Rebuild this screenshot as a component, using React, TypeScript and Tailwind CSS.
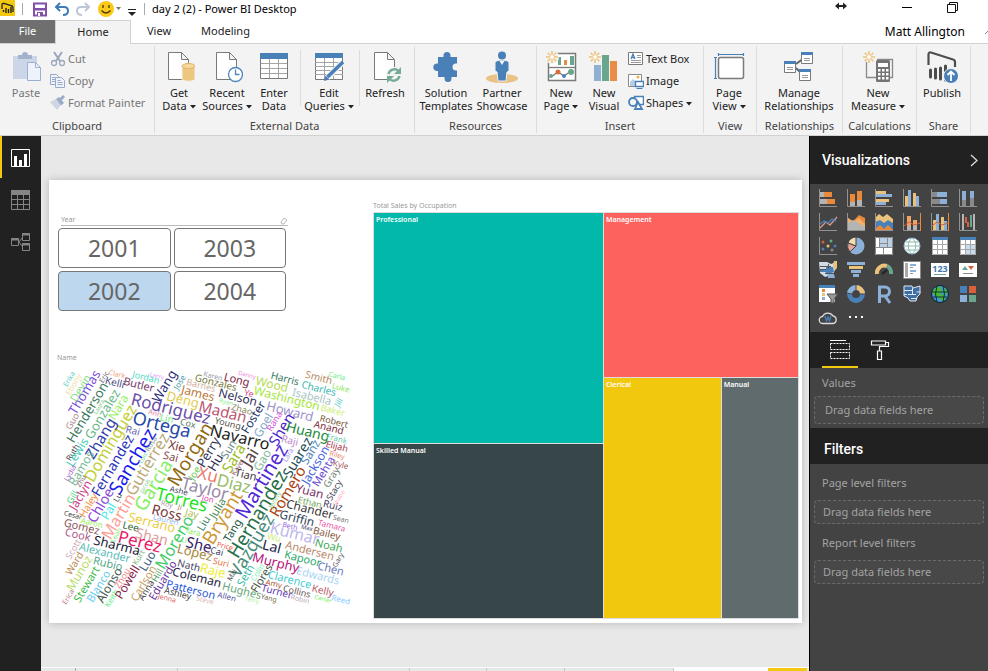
import React from "react";

type Kids = { children?: React.ReactNode };

/* ---------- Ribbon ---------- */

const Caret = () => (
  <svg className="ml-[3px] inline-block align-middle" width="6" height="4" viewBox="0 0 6 4">
    <path d="M0 0h6L3 3.6z" fill="#222" />
  </svg>
);

function Group({ label, className, children }: Kids & { label: string; className: string }) {
  return (
    <section aria-label={label} className={`flex shrink-0 flex-col py-[2px] ${className}`}>
      <div className="flex h-full flex-col border-r border-[#dcdcdc]">
        <div className="flex flex-1">{children}</div>
        <div className="h-[15px] text-center leading-[15px] text-[#444]">{label}</div>
      </div>
    </section>
  );
}

function BigButton({
  icon, lines, caret, className, muted,
}: { icon: React.ReactNode; lines: string[]; caret?: boolean; className: string; muted?: boolean }) {
  return (
    <button className={`flex flex-col items-center whitespace-nowrap pt-[5px] leading-[13px] ${muted ? "text-[#777]" : "text-[#222]"} ${className}`}>
      <span className="mb-[3px] block h-8">{icon}</span>
      {lines.map((l, i) => (
        <span key={l} className="block">
          {l}
          {caret && i === lines.length - 1 && <Caret />}
        </span>
      ))}
    </button>
  );
}

function SmallButton({ icon, label, caret, muted }: { icon: React.ReactNode; label: string; caret?: boolean; muted?: boolean }) {
  return (
    <button className={`flex h-[22px] items-center gap-[2px] whitespace-nowrap ${muted ? "text-[#777]" : "text-[#222]"}`}>
      <span className="block w-4">{icon}</span>
      <span>
        {label}
        {caret && <Caret />}
      </span>
    </button>
  );
}

const Svg32 = ({ children }: Kids) => (
  <svg width="32" height="32" viewBox="0 0 32 32" fill="none">{children}</svg>
);
const Svg16 = ({ children }: Kids) => (
  <svg width="16" height="16" viewBox="0 0 16 16" fill="none">{children}</svg>
);

const Sheet = () => (
  <path d="M5.500 1.500h13l7 7v20h-20zM18.500 1.500v7h7" fill="#fff" stroke="#7a7a7a" />
);
const Spark = ({ x, y }: { x: number; y: number }) => (
  <g transform={`translate(${x} ${y})`} stroke="#eec27a" strokeWidth="1.600">
    <path d="M0-6V-3M0 3V6M-6 0H-3M3 0H6M-4.300-4.300L-2.300-2.300M2.300 2.300L4.300 4.300M-4.300 4.300L-2.300 2.300M2.300-2.300L4.300-4.300" />
    <circle r="2.400" fill="#fff" strokeWidth="1" />
  </g>
);

const PasteIcon = () => (
  <Svg32>
    <path d="M3 5h24v23H3z" fill="#cdd6e8" />
    <path d="M8 8V4h4a3 3 0 0 1 6 0h4v4z" fill="#a3b2cd" />
    <path d="M17.500 11.500h8l5 5v13h-13z" fill="#eef3fb" stroke="#9db0d2" />
    <path d="M25.500 11.500v5h5" stroke="#9db0d2" />
  </Svg32>
);
const CutIcon = () => (
  <Svg16>
    <path d="M4 1l6 9M12 1L6 10" stroke="#9aa7bd" strokeWidth="2" />
    <circle cx="4" cy="12" r="2.500" stroke="#9aa7bd" strokeWidth="1.300" />
    <circle cx="12" cy="12" r="2.500" stroke="#9aa7bd" strokeWidth="1.300" />
  </Svg16>
);
const CopyIcon = () => (
  <Svg16>
    <path d="M.500 1.500h6l2 2v8h-8z" fill="#eef2fa" stroke="#9aabc9" />
    <path d="M5.500 4.500h6l3 3v7h-9z" fill="#eef2fa" stroke="#9aabc9" />
    <path d="M2 4.500h3M2 6.500h3M2 8.500h3M7.500 7.500h3M7.500 9.500h5M7.500 11.500h5" stroke="#9aabc9" />
  </Svg16>
);
const PainterIcon = () => (
  <Svg16>
    <path d="M0 7l6-3 5 6-4 5z" fill="#cfd6e2" />
    <path d="M6 4l3-2 5 6-3 2.500z" fill="#9aabc9" />
    <path d="M10 5l4-4" stroke="#9aabc9" strokeWidth="3" />
  </Svg16>
);
const GetDataIcon = () => (
  <Svg32>
    <Sheet />
    <path d="M19 15v13c0 3 13 3 13 0V15z" fill="#eec77f" stroke="#f3f3f3" />
    <ellipse cx="25.500" cy="15" rx="6.500" ry="2.500" fill="#f4d89f" stroke="#e2b562" />
  </Svg32>
);
const RecentIcon = () => (
  <Svg32>
    <Sheet />
    <circle cx="24.500" cy="23.500" r="7" fill="#fff" stroke="#4f86bd" strokeWidth="1.300" />
    <path d="M24.500 18.500v5h4" stroke="#4f86bd" strokeWidth="1.300" />
  </Svg32>
);
const EnterIcon = () => (
  <Svg32>
    <path d="M2.500 2.500h27v25h-27z" fill="#fff" stroke="#7a7a7a" />
    <path d="M2 2h28v6H2z" fill="#4a80b8" />
    <path d="M3 12.500h26M3 17.500h26M3 22.500h26M11.500 8v19M20.500 8v19" stroke="#a4a4a4" />
  </Svg32>
);
const EditIcon = () => (
  <Svg32>
    <path d="M2.500 2.500h27v26h-27z" fill="#fff" stroke="#7a7a7a" />
    <path d="M2 2h28v5H2z" fill="#4a80b8" />
    <path d="M2 11.500h28M2 15.500h28M2 19.500h28M2 23.500h28M11.500 7v21M20.500 7v21" stroke="#a4a4a4" />
    <path d="M14 27L29 12" stroke="#f3f3f3" strokeWidth="6" />
    <path d="M14.500 26L30 11" stroke="#4a80b8" strokeWidth="3.600" />
    <path d="M11 30l1.500-5.500 4 4z" fill="#4a80b8" />
  </Svg32>
);
const RefreshIcon = () => (
  <Svg32>
    <Sheet />
    <circle cx="25" cy="24" r="8" fill="#f3f3f3" />
    <path d="M19.500 23a6 6 0 0 1 10-3M30.500 25a6 6 0 0 1-10 3" stroke="#74ab94" strokeWidth="2.400" />
    <path d="M32 16v7h-7zM18 32v-7h7z" fill="#74ab94" />
  </Svg32>
);
const PuzzleIcon = () => (
  <Svg32>
    <path d="M8 6h5.500v-1.500a3.500 3.500 0 0 1 7 0V6H27v6.500h-1a3.500 3.500 0 0 0 0 7h1V26h-5.500v1.500a3.500 3.500 0 0 1-7 0V26H8v-6H6.500a3.800 3.800 0 0 1 0-7.500H8z" fill="#4a80b8" />
  </Svg32>
);
const PartnerIcon = () => (
  <Svg32>
    <ellipse cx="16" cy="27.500" rx="16" ry="4.500" fill="#eac286" />
    <path d="M9 11c2-2.500 12-2.500 14 0v9l-2 1-1 9h-8l-1-9-2-1z" fill="#4a80b8" stroke="#f3f3f3" />
    <path d="M13.500 10l2.500 4 2.500-4z" fill="#f3f3f3" />
    <circle cx="16" cy="4.500" r="4" fill="#4a80b8" />
  </Svg32>
);
const NewPageIcon = () => (
  <Svg32>
    <path d="M3.500 2.500h27v27h-27z" fill="#fff" stroke="#7a7a7a" strokeWidth="1.500" />
    <path d="M3 16.500h28" stroke="#7a7a7a" strokeWidth="1.300" />
    <path d="M13 6h3v8h-3zM25 5h4v9h-4z" fill="#6aa58e" />
    <path d="M19 9h3v5h-3z" fill="#e98c45" />
    <path d="M6 26l7-5 6 4 7-5" stroke="#777" strokeWidth="1.300" />
    <circle cx="6" cy="25" r="2" fill="#6aa58e" /><circle cx="13" cy="21" r="2.500" fill="#d8703d" />
    <circle cx="19" cy="25" r="2" fill="#4a80b8" /><circle cx="26" cy="21" r="3" fill="#6aa58e" />
    <circle cx="7" cy="6" r="7" fill="#f3f3f3" />
    <Spark x={7} y={6} />
  </Svg32>
);
const NewVisualIcon = () => (
  <Svg32>
    <path d="M6 14h7v16H6z" fill="#8fb0d3" /><path d="M14 4h7v26h-7z" fill="#6aa58e" />
    <path d="M22 10h7v20h-7z" fill="#e98c45" />
    <Spark x={7} y={6} />
  </Svg32>
);
const TextBoxIcon = () => (
  <Svg16>
    <path d="M.500 1.500h14v12h-14z" fill="#fff" stroke="#7a7a7a" />
    <path d="M3 8l2-5 2 5M3.500 6.500h3" stroke="#4a80b8" strokeWidth="1.300" />
    <path d="M9 4.500h4M9 6.500h4M3 9.500h10M3 11.500h10" stroke="#9a9a9a" />
  </Svg16>
);
const ImageIcon = () => (
  <Svg16>
    <path d="M.500 1.500h13v12H.500z" fill="#fff" stroke="#8a8a8a" />
    <path d="M2 13V9l3-3 3 3v4z" fill="#b8cce4" /><circle cx="10" cy="4" r="1.500" fill="#e9b052" />
    <path d="M7.500 8.500h8v5h-8z" fill="#fff" stroke="#4a80b8" strokeWidth="1.400" />
    <path d="M8.500 15.500h6" stroke="#4a80b8" />
  </Svg16>
);
const ShapesIcon = () => (
  <Svg16>
    <path d="M6.500 1.500h9v8h-9z" fill="#fff" stroke="#4a80b8" strokeWidth="1.500" />
    <circle cx="5" cy="7" r="4" fill="#f3f3f3" stroke="#4a80b8" strokeWidth="1.800" />
    <path d="M7 14l3-7 4 7z" fill="#fff" stroke="#4a80b8" strokeWidth="1.800" />
  </Svg16>
);
const PageViewIcon = () => (
  <Svg32>
    <rect x="5.500" y="6.500" width="25" height="21" rx="2" fill="#fff" stroke="#7a7a7a" strokeWidth="1.500" />
    <path d="M5 3.500h25M5.500 2v3M30.500 2v3M2.500 6v21M1 6.500h3M1 27.500h3" stroke="#4a80b8" strokeWidth="1.200" />
  </Svg32>
);
const ManageIcon = () => (
  <Svg32>
    <path d="M13 13l8-6M13 17l8 8" stroke="#666" strokeWidth="2" />
    {[[1, 10], [18, 1], [16, 18]].map(([x, y]) => (
      <g key={x} transform={`translate(${x} ${y})`}>
        <path d="M.500.500h11v11H.500z" fill="#fff" stroke="#7a7a7a" />
        <path d="M0 0h12v3H0z" fill="#4a80b8" />
        <path d="M3 6.500h6M3 8.500h6" stroke="#999" />
      </g>
    ))}
  </Svg32>
);
const MeasureIcon = () => (
  <Svg32>
    <path d="M4.500 11v15.500H15M15 8.500h15.500v18H27" stroke="#8a8a8a" strokeWidth="1.300" />
    <rect x="14" y="9" width="14" height="22" rx="1.500" fill="#747474" />
    <path d="M16 12h10v4H16z" fill="#fff" />
    {[18, 22, 26].map((y) => (
      <path key={y} d={`M16 ${y}h2.500v2.500H16zM20 ${y}h2.500v2.500H20zM24 ${y}h2.500v2.500H24z`} fill="#fff" />
    ))}
    <Spark x={7} y={6} />
  </Svg32>
);
const PublishIcon = () => (
  <Svg32>
    <path d="M2.500 14V3.500Q2.500 1 5 1.500L27 8.500Q29 9 29 11V16" stroke="#4d4d4d" strokeWidth="2.200" />
    <path d="M4.500 19v7M9.500 18v9M14.500 17v11M19.500 15v14" stroke="#4d4d4d" strokeWidth="3" strokeLinecap="round" />
    <circle cx="25" cy="25" r="7.500" fill="#4a80b8" stroke="#f3f3f3" />
    <path d="M25 30v-9M21.500 24l3.500-3.500 3.500 3.500" stroke="#fff" strokeWidth="1.800" />
  </Svg32>
);

/* ---------- Visualization gallery ---------- */

const O = "#e8893c", B = "#8cb0d8", T = "#ebc27c", G = "#8a8a8a", L = "#b4b4b4", D = "#4a80b8", N = "#6aa58e", R = "#d9603c";
const Axis = () => <path d="M.500 0v17.500H18" stroke="#929292" />;
const Box = ({ f, d }: { f: string; d: string }) => <path d={d} fill={f} />;

const visuals: [string, React.ReactNode][] = [
  ["Stacked bar chart", <><Axis /><Box f={L} d="M1 3h4v5H1zM1 10h7v5H1z" /><Box f={O} d="M5 3h8v5H5zM8 10h8v5H8z" /></>],
  ["Stacked column chart", <><Axis /><Box f={L} d="M3 13h5v4H3zM10 11h5v6h-5z" /><Box f={O} d="M3 5h5v8H3zM10 2h5v9h-5z" /></>],
  ["Clustered bar chart", <><Axis /><Box f={T} d="M1 2h10v3H1zM1 10h13v3H1z" /><Box f={B} d="M1 5h16v3H1zM1 13h10v3H1z" /></>],
  ["Clustered column chart", <><Axis /><Box f={T} d="M2 7h3v10H2zM10 4h3v13h-3z" /><Box f={B} d="M5 1h3v16H5zM13 7h3v10h-3z" /></>],
  ["100% stacked bar chart", <><Axis /><Box f={G} d="M1 3h5v5H1zM1 10h8v5H1z" /><Box f={B} d="M6 3h10v5H6zM9 10h7v5H9z" /></>],
  ["100% stacked column chart", <><Axis /><Box f={G} d="M3 11h4v6H3zM11 9h4v8h-4z" /><Box f={B} d="M3 2h4v9H3zM11 2h4v7h-4z" /></>],
  ["Line chart", <><Axis /><path d="M1 15l6-6 4 3 7-8" stroke="#d99686" strokeWidth="1.400" /><path d="M1 11l4-3 4 2 4-4 4 2" stroke="#4a80b8" strokeWidth="1.400" /></>],
  ["Area chart", <><Box f={O} d="M1 5l5 3 6-6 6 3v8H1z" /><Box f="#f3b06c" d="M1 5l5 4 6-4 6 6v4H1z" /><Box f={L} d="M1 10l5-3 12 7v3H1z" /><Axis /></>],
  ["Stacked area chart", <><Box f={T} d="M0 5l4-4 4 3 4-3 6 5v10H0z" /><Box f={D} d="M0 9l5-2 4 3 4-3 5 3v7H0z" /><Box f={O} d="M0 16l5-4 4 4 4-4 5 5v1H0z" /><Axis /></>],
  ["Line and stacked column chart", <><Axis /><Box f="#f0a367" d="M4 3h4v10H4zM10 7h4v6h-4z" /><Box f={O} d="M17 0h1v18h-1z" /><Box f={L} d="M4 13h4v4H4zM10 12h4v5h-4z" /><path d="M1 13l5-4 5 3 6-2" stroke={R} /></>],
  ["Line and clustered column chart", <><Axis /><Box f={T} d="M2 7h3v10H2zM10 4h3v13h-3z" /><Box f={B} d="M5 1h3v16H5zM13 8h3v9h-3z" /><Box f={O} d="M17 0h1v18h-1z" /><path d="M1 13l5-4 5 3 6-2" stroke={R} /></>],
  ["Waterfall chart", <><Axis /><Box f={L} d="M3 1h2v16H3zM14 1h2v16h-2z" /><Box f={R} d="M6 4h2v6H6zM8 9h2v5H8z" /><Box f={N} d="M11 2h2v12h-2z" /></>],
  ["Scatter chart", <><Axis /><circle cx="4" cy="5" r="1.500" fill={R} /><circle cx="12" cy="4" r="1.500" fill={N} /><circle cx="9" cy="9" r="1.500" fill={T} /><circle cx="4" cy="12" r="1.500" fill={D} /><circle cx="16" cy="9" r="1.500" fill={D} /><circle cx="13" cy="13" r="1.500" fill={G} /></>],
  ["Pie chart", <><circle cx="9" cy="9" r="8.500" fill={B} /><path d="M9 9V0A9 9 0 0 0 1 6z" fill="#f2dcb2" stroke="#434343" /><path d="M9 9L1 6a9 9 0 0 0 2 9z" fill="#e5a596" stroke="#434343" /></>],
  ["Treemap", <><Box f="#fff" d="M0 0h18v18H0z" /><Box f="#b9cfe6" d="M5 1h7v5H5zM13 1h4v9h-4zM5 7h7v3H5z" /><path d="M.500.500h17v17H.500zM4.500 1v9.500M4.500 6.500h8M12.500 1v9.500M0 10.500h18M8.500 11v7" stroke={G} /></>],
  ["Map", <><circle cx="9" cy="9" r="8" fill="#fff" stroke="#8fb4d0" /><path d="M1 9h16M3 5h12M3 13h12M9 1C4 5 4 13 9 17M9 1c5 4 5 12 0 16" stroke="#8dbba9" /></>],
  ["Table", <><Box f="#fff" d="M1 0h16v18H1z" /><Box f={D} d="M1 0h16v3H1z" /><path d="M1.500 3v14.500h15V3M1 7.500h16M1 12.500h16M6.500 3v15M11.500 3v15" stroke="#a8a8a8" /></>],
  ["Matrix", <><Box f="#fff" d="M1 0h16v18H1z" /><Box f="#c9dbee" d="M6 8h11v10H6z" /><Box f={D} d="M1 0h16v3H1z" /><path d="M1.500 3v14.500h15V3M1 7.500h16M1 12.500h16M6.500 3v15M11.500 3v15" stroke="#a8a8a8" /></>],
  ["Filled map", <><Box f="#d3dbe6" d="M0 1h8l4 2 5-2v6l-2 4-2 6-2-3-5 2-5-4z" /><Box f={D} d="M7 6h7l1 5-6 2-3-2h-5v-2h6z" /><Box f={T} d="M15 0h3v7l-2 2-2-4z" /><Box f={B} d="M8 13h7l1 4H9z" /><path d="M1 5.500h11M1 8.500h6M9.500 3v5M6 12.500h9" stroke="#555" /></>],
  ["Funnel", <><Box f={B} d="M0 1h18v3H0z" /><Box f={T} d="M2 5h14v3H2z" /><Box f={B} d="M4 9h10v3H4zM6 13h6v3H6z" /></>],
  ["Gauge", <><path d="M2 13A7.500 7.500 0 0 1 12 5" stroke={T} strokeWidth="4" /><path d="M12 5a8 8 0 0 1 4 8" stroke={N} strokeWidth="4" /><path d="M7 13l5-4" stroke="#222" strokeWidth="2" /></>],
  ["Multi-row card", <><path d="M.500.500h17v17H.500z" fill="#fff" stroke={G} /><Box f="#aaa" d="M2 2h3v14H2z" /><Box f={B} d="M7 3h6v2H7zM7 9h6v2H7z" /><path d="M7 6.500h3M7 12.500h3" stroke="#999" /></>],
  ["Card", <><Box f="#fff" d="M0 2h18v14H0z" /><text x="9" y="11" textAnchor="middle" className="fill-[#3f76b0] text-[9px] font-bold">123</text><path d="M3 13.500h12" stroke={N} /></>],
  ["KPI", <><Box f="#fff" d="M0 2h18v14H0z" /><Box f={N} d="M3 9l3-4 3 4z" /><Box f={R} d="M9 5h6l-3 4z" /><path d="M4 12.500h10" stroke={G} /></>],
  ["Slicer", <><Box f="#fff" d="M0 0h16v17H0z" /><Box f={D} d="M0 0h16v3H0z" /><Box f={O} d="M3 4h3v3H3z" /><Box f={T} d="M3 8h3v3H3z" /><Box f={B} d="M3 12h3v3H3z" /><path d="M8 9h11l-4 5v4h-3v-4z" fill="#999" stroke="#555" /></>],
  ["Donut chart", <><circle cx="9" cy="9" r="6.500" stroke={D} strokeWidth="5" /><path d="M9 2.500A6.500 6.500 0 0 1 15.500 9" stroke={T} strokeWidth="5" /><path d="M2.500 9A6.500 6.500 0 0 1 9 2.500" stroke={B} strokeWidth="5" /><path d="M9 0v5M13 9h5M0 8l5 1" stroke="#434343" /></>],
  ["R script visual", <path d="M4.500 18V2H10a4.500 4.500 0 0 1 0 9H5M10 11l5 7" stroke={B} strokeWidth="3" />],
  ["Shape map", <><path d="M1 1h8l1 2 7-2v8l-3 3-1 4H7l-2-3-4-2z" fill="#3f6ea5" stroke="#dfe8f3" /><path d="M1 5.500h9M5 9.500h8M9.500 3v6M1 9.500h3M8 13.500h6M13.500 7h4" stroke="#dfe8f3" /></>],
  ["ArcGIS map", <><circle cx="9" cy="9" r="9" fill="#123" /><circle cx="9" cy="9" r="8" fill="#3d9bd6" /><path d="M2 5l7-4 2 6-5 5-4-3zM8 9l6 1-1 6-5-2zM12 2l4 4v4l-4-3z" fill="#4cb82e" /><path d="M1 7h16M2 12h14M6 1q-3 8 0 16M12 1q3 8 0 16" stroke="#133" /></>],
  ["Tile visual", <><Box f={D} d="M1 1h7v7H1z" /><Box f={R} d="M10 1h7v7h-7z" /><Box f={B} d="M1 10h7v7H1z" /><Box f={N} d="M10 10h7v7h-7z" /></>],
  ["Word cloud", <><path d="M4 14.500a3.500 3.500 0 0 1-.500-7A6 6 0 0 1 14 7a3.800 3.800 0 0 1 0 7.500z" stroke="#ddd" strokeWidth="1.300" /><path d="M6 7l1.500 5L9 8l1.500 4L12 7" stroke={D} strokeWidth="1.300" /></>],
  ["More options", <path d="M2 7h2v2H2zM8 7h2v2H8zM14 7h2v2h-2z" fill="#fff" />],
];

/* ---------- Word cloud data: word, centre x, centre y, size, direction, colour ---------- */

type Word = [string, number, number, number, "a" | "b", string];
const words: Word[] = [
  ["Erika", 69, 379, 7, "b", "#5cccc4"], ["Ebony", 73, 384, 8, "b", "#eeddaa"], ["Devin", 80, 388, 11, "b", "#7fe08a"],
  ["Thomas", 84, 392, 13, "b", "#7a4fd8"], ["Eric", 104, 377, 7, "b", "#666"], ["Clark", 117, 374, 7, "a", "#f0a080"],
  ["Kelli", 115, 382, 10, "a", "#4a4a86"], ["Butler", 139, 384, 11, "a", "#7a3a68"], ["Jordan", 146, 377, 9, "a", "#4ddcc0"],
  ["Larry", 157, 376, 6, "a", "#dd99ff"], ["Wang", 164, 386, 13, "b", "#2d2d7c"], ["Jose", 179, 382, 8, "b", "#4a9aaa"],
  ["Karen", 213, 376, 7, "a", "#99a"], ["Gonzales", 216, 382, 10, "a", "#77773a"], ["Long", 237, 379, 11, "a", "#7c2040"],
  ["Danny", 247, 375, 6, "a", "#f08ae0"], ["Barnes", 201, 385, 9, "a", "#d0b0a0"], ["James", 198, 393, 12, "a", "#b87838"],
  ["Deng", 183, 399, 13, "a", "#e3cc50"], ["Rodriguez", 171, 408, 17, "a", "#6b4fa8"], ["Wood", 272, 384, 12, "a", "#b4dc50"],
  ["Harris", 285, 378, 10, "a", "#33775a"], ["Smith", 319, 377, 10, "a", "#b88a60"], ["Charles", 319, 388, 10, "a", "#38b8b0"],
  ["Carla", 337, 376, 7, "a", "#66ee88"], ["Luke", 341, 387, 8, "a", "#88e65a"], ["Nelson", 238, 397, 12, "a", "#30305a"],
  ["Ye", 249, 393, 9, "a", "#d85090"], ["Washington", 287, 398, 12, "a", "#a6e63c"], ["Isabella", 312, 396, 11, "a", "#a8c4c4"],
  ["Jill", 338, 402, 8, "b", "#55cccc"], ["Baker", 333, 410, 9, "a", "#ccee77"], ["Ryan", 226, 402, 6, "a", "#88ee88"],
  ["Zhao", 242, 409, 9, "a", "#8a8a60"], ["Madan", 223, 411, 15, "a", "#bb5570"], ["Foster", 253, 417, 12, "b", "#223366"],
  ["Howard", 290, 411, 13, "a", "#9c94c8"], ["Goel", 263, 425, 12, "b", "#88a8cc"], ["Rana", 274, 421, 9, "b", "#d855dd"],
  ["Shen", 281, 429, 15, "b", "#4a22cc"], ["Huang", 308, 431, 14, "a", "#228838"], ["Robert", 334, 421, 9, "a", "#775538"],
  ["Anand", 329, 427, 10, "a", "#7c2a38"], ["Frank", 337, 438, 8, "a", "#66ccaa"], ["Elijah", 337, 446, 9, "a", "#aa3848"],
  ["Riley", 337, 455, 7, "a", "#ee8870"], ["Kyle", 341, 464, 8, "a", "#a85860"], ["Young", 228, 423, 9, "a", "#555548"],
  ["Navarro", 240, 437, 16, "a", "#222"], ["Raji", 290, 440, 10, "a", "#bb88cc"], ["Morgan", 190, 454, 19, "b", "#8f6a10"],
  ["Ortega", 162, 424, 18, "a", "#2648a8"], ["Ann", 155, 413, 7, "a", "#dd88aa"], ["Lin", 167, 418, 10, "a", "#77ee88"],
  ["Cox", 188, 423, 9, "a", "#557766"], ["Xie", 177, 446, 12, "a", "#773838"], ["Sai", 171, 456, 11, "a", "#884848"],
  ["Rai", 133, 430, 10, "a", "#6868b8"], ["Guo", 72, 421, 9, "b", "#aa8888"], ["Henderson", 87, 412, 13, "b", "#38785a"],
  ["Laura", 99, 407, 6, "b", "#77cc88"], ["Gonzalez", 102, 414, 13, "b", "#68b888"], ["Nara", 118, 407, 12, "b", "#99ee66"],
  ["Dominguez", 110, 443, 16, "b", "#c0d038"], ["Zhang", 100, 438, 15, "b", "#3040a8"], ["Ruth", 72, 452, 8, "b", "#444"],
  ["Lewis", 77, 452, 12, "b", "#44ccb8"], ["Ramos", 81, 468, 12, "b", "#78bc98"], ["Lydia", 70, 473, 7, "b", "#aa66cc"],
  ["Zhu", 81, 481, 7, "b", "#886666"], ["Fernandez", 112, 465, 14, "b", "#2834b8"], ["Sanchez", 132, 461, 19, "b", "#1818f0"],
  ["Gutierrez", 147, 464, 16, "b", "#bcaa78"], ["Garcia", 153, 485, 19, "b", "#88ee66"], ["Luis", 143, 458, 6, "b", "#77dd99"],
  ["Rosa", 151, 444, 7, "b", "#889999"], ["Jacob", 145, 486, 6, "b", "#8fd0a0"], ["Joe", 194, 473, 10, "b", "#66cc55"],
  ["Perry", 208, 452, 13, "b", "#333358"], ["Hu", 215, 462, 13, "b", "#333355"], ["Sun", 228, 449, 11, "b", "#668890"],
  ["Sara", 233, 458, 15, "b", "#9cbc28"], ["Jai", 249, 457, 17, "b", "#5c4444"], ["Gao", 262, 460, 12, "b", "#88bb99"],
  ["Kaye", 237, 468, 7, "b", "#a06878"], ["Xu", 208, 474, 17, "a", "#ee7a70"], ["Tian", 246, 474, 11, "a", "#443838"],
  ["Diaz", 234, 483, 17, "a", "#98bc68"], ["Martinez", 261, 481, 20, "b", "#5028d8"], ["Lara", 288, 455, 7, "b", "#a898ee"],
  ["Suarez", 297, 457, 14, "b", "#225058"], ["Sanz", 310, 452, 12, "b", "#5488bb"], ["Jackson", 315, 465, 12, "b", "#4466dd"],
  ["Mehta", 323, 471, 11, "b", "#6644cc"], ["Gray", 331, 477, 10, "b", "#778877"], ["Hernandez", 257, 514, 19, "b", "#287048"],
  ["Vazquez", 251, 545, 18, "b", "#4a8c7c"], ["Romero", 287, 491, 15, "b", "#aa4410"], ["Bryant", 222, 517, 19, "b", "#d09a3c"],
  ["Taylor", 205, 488, 17, "a", "#9888a8"], ["Torres", 182, 499, 18, "a", "#1ee41e"], ["Jon", 208, 498, 8, "a", "#dd44aa"],
  ["Julia", 217, 508, 11, "b", "#448858"], ["Liu", 203, 523, 11, "b", "#448866"], ["Tang", 232, 530, 11, "b", "#225540"],
  ["Ashe", 179, 490, 8, "a", "#444458"], ["Ross", 167, 512, 14, "a", "#773838"], ["Jay", 192, 513, 10, "a", "#b0bc50"],
  ["Roy", 167, 504, 7, "a", "#b098a8"], ["Ji", 180, 507, 7, "a", "#b07070"], ["Lauren", 166, 519, 8, "a", "#99bbee"],
  ["Serrano", 152, 522, 13, "a", "#eecc44"], ["Lee", 131, 526, 10, "a", "#336638"], ["Shan", 152, 536, 14, "a", "#dd9c98"],
  ["Perez", 140, 541, 17, "a", "#e81868"], ["Sharma", 117, 545, 13, "a", "#222238"], ["Kurt", 138, 557, 8, "b", "#88bb88"],
  ["Alexander", 105, 552, 11, "a", "#58bcb8"], ["Rubio", 108, 563, 11, "a", "#55aa88"], ["Moreno", 174, 542, 16, "b", "#44cc66"],
  ["Tara", 193, 531, 8, "a", "#88ee66"], ["Lopez", 195, 552, 13, "a", "#a88838"], ["She", 199, 544, 15, "a", "#362468"],
  ["Cai", 217, 551, 9, "a", "#446"], ["Li", 184, 540, 7, "a", "#77ee77"], ["Martin", 118, 516, 16, "b", "#ff9c94"],
  ["Pal", 108, 511, 12, "b", "#44e8e8"], ["Chloe", 100, 505, 14, "b", "#8848d8"], ["Lu", 117, 497, 8, "b", "#444"],
  ["Haley", 88, 505, 10, "b", "#ee9040"], ["Jaclyn", 80, 495, 12, "b", "#cc4488"], ["Gill", 72, 497, 9, "b", "#44cc77"],
  ["Cesar", 73, 515, 7, "a", "#444"], ["Gomez", 82, 526, 11, "a", "#885858"], ["Aaron", 92, 522, 8, "a", "#99ee55"],
  ["Cook", 78, 534, 11, "a", "#aa5888"], ["Scott", 73, 549, 9, "b", "#ccaabb"], ["Ward", 74, 563, 10, "b", "#b88850"],
  ["Munoz", 79, 573, 12, "b", "#b8dc68"], ["Stewart", 86, 584, 11, "b", "#38b848"], ["Erica", 68, 597, 7, "b", "#b87888"],
  ["Blanco", 98, 586, 11, "b", "#66ccee"], ["Alonso", 109, 585, 12, "b", "#445a50"], ["Keith", 111, 598, 8, "b", "#66ee88"],
  ["Zhou", 122, 578, 9, "b", "#ee8888"], ["Powell", 127, 582, 12, "b", "#882448"], ["Carlson", 143, 583, 11, "b", "#c4a268"],
  ["Leah", 116, 535, 7, "b", "#88ee88"], ["Luo", 147, 561, 12, "b", "#335c80"], ["Anna", 146, 590, 9, "b", "#444"],
  ["Hill", 157, 575, 9, "b", "#449950"], ["Eduardo", 162, 580, 11, "b", "#663399"], ["Nath", 189, 565, 10, "a", "#444466"],
  ["Raje", 213, 570, 13, "a", "#eeee38"], ["Coleman", 197, 577, 12, "a", "#222240"], ["Patterson", 191, 589, 11, "a", "#2858d8"],
  ["Ashley", 178, 593, 9, "a", "#444"], ["Jenna", 167, 598, 7, "a", "#d86868"], ["Steve", 205, 600, 7, "a", "#ddbbb8"],
  ["Allen", 227, 596, 8, "a", "#5858a8"], ["Hughes", 242, 590, 11, "a", "#68a878"], ["Yang", 269, 598, 7, "a", "#776648"],
  ["Terry", 252, 600, 6, "a", "#aaee99"], ["Turner", 277, 591, 10, "a", "#6238b8"], ["Robin", 300, 599, 7, "a", "#bba8b8"],
  ["Collins", 297, 591, 9, "a", "#685558"], ["Kelly", 323, 590, 10, "a", "#b85868"], ["Reed", 341, 599, 8, "a", "#88ccff"],
  ["Carter", 323, 599, 6, "a", "#77ee66"], ["Amy", 274, 583, 8, "a", "#a85838"], ["Clarence", 290, 579, 11, "a", "#44ccd0"],
  ["Edwards", 318, 575, 11, "a", "#a8d4f4"], ["Murphy", 276, 562, 13, "a", "#b81078"], ["Suri", 221, 562, 9, "a", "#ee7848"],
  ["Price", 225, 546, 7, "a", "#ee5548"], ["Mai", 232, 575, 7, "b", "#444"], ["Seth", 245, 575, 11, "b", "#38bba8"],
  ["Colin", 257, 572, 8, "b", "#88eebb"], ["Flores", 261, 578, 11, "b", "#445544"], ["Lal", 272, 546, 14, "a", "#182048"],
  ["Wu", 274, 537, 9, "a", "#ccee77"], ["Kumar", 295, 533, 16, "a", "#beb8ee"], ["Beth", 290, 526, 7, "a", "#9966dd"],
  ["Max", 307, 528, 6, "a", "#444477"], ["Griffin", 297, 518, 12, "a", "#334458"], ["Bailey", 327, 533, 10, "a", "#885838"],
  ["Tamara", 332, 525, 8, "a", "#ee55aa"], ["Sean", 341, 519, 7, "a", "#777"], ["Chander", 310, 509, 12, "a", "#3a3438"],
  ["Ethan", 310, 502, 9, "a", "#77a858"], ["Ruiz", 333, 505, 10, "a", "#444466"], ["Yuan", 310, 491, 12, "a", "#7a3068"],
  ["Stacy", 334, 490, 9, "b", "#444458"], ["Shane", 339, 498, 6, "b", "#ffaabb"], ["Jenny", 275, 500, 7, "b", "#99cc88"],
  ["Noah", 329, 545, 11, "a", "#44a855"], ["Andersen", 310, 550, 11, "a", "#b88868"], ["Kapoor", 303, 558, 11, "a", "#28a868"],
  ["Chen", 331, 568, 11, "a", "#6878b8"], ["Gary", 338, 560, 7, "b", "#555"],
];

function WordCloud() {
  return (
    <svg role="img" aria-label="Word cloud of customer names" className="w-[300px]" viewBox="57 364 300 244">
      {words.map(([text, x, y, size, dir, color]) => (
        <text
          key={text}
          transform={`translate(${x} ${y}) rotate(${dir === "a" ? 14 : -59})`}
          textAnchor="middle"
          dominantBaseline="central"
          fontSize={size}
          fill={color}
        >
          {text}
        </text>
      ))}
    </svg>
  );
}

function Tile({ name, className }: { name: string; className: string }) {
  return (
    <div className={`px-[2px] pt-[2px] text-[7px] font-semibold leading-[9px] text-white ${className}`}>{name}</div>
  );
}

function Drop({ className }: { className: string }) {
  return (
    <div className={`mx-1 flex items-center rounded border border-dashed border-[#6a6a6a] bg-[#484848] text-[#a3a3a3] ${className}`}>
      Drag data fields here
    </div>
  );
}

export default function App() {
  return (
    <div className="flex h-screen flex-col overflow-hidden bg-white font-['Noto_Sans','Open_Sans',sans-serif] text-[11px] text-[#222]">
      <header className="flex h-5 shrink-0 items-start">
        <svg width="15" height="16" viewBox="0 0 15 16" fill="none">
          <path d="M0 0h15v16H0z" fill="#f2c811" />
          <path d="M2 9V5q0-2 2-1.500l7 2q2 .500 2 2V12" stroke="#222" strokeWidth="1.300" />
          <path d="M3.500 10v2M6 8v5M8.500 9v4M11 7v6" stroke="#222" strokeWidth="1.400" />
        </svg>
        <span className="ml-[7px] mt-[3px] h-3 w-px bg-[#aaa]" />
        <div className="ml-[10px] flex gap-[7px]">
          <button aria-label="Save">
            <svg width="14" height="16" viewBox="0 0 14 16" fill="none">
              <path d="M1 2.500h12v12H1z" fill="#fff" stroke="#8250a8" strokeWidth="2" />
              <path d="M2 7h10v2.500H2zM4 11h6v4H4z" fill="#8250a8" /><path d="M5 12h2v3H5z" fill="#fff" />
            </svg>
          </button>
          <button aria-label="Undo">
            <svg width="15" height="16" viewBox="0 0 15 16" fill="none" stroke="#3f7ab8" strokeWidth="2">
              <path d="M6 2L2 6l4 4M2 6h8q4 0 4 4 0 4-5 4" />
            </svg>
          </button>
          <button aria-label="Redo">
            <svg width="15" height="16" viewBox="0 0 15 16" fill="none" stroke="#bcc6d4" strokeWidth="2">
              <path d="M9 2l4 4-4 4M13 6H5q-4 0-4 4 0 4 5 4" />
            </svg>
          </button>
          <button aria-label="Send feedback" className="flex items-center gap-[2px]">
            <svg width="16" height="17" viewBox="0 0 16 17" fill="none">
              <circle cx="8" cy="9" r="8" fill="#fbc91c" />
              <path d="M5 5v3M11 5v3M3.500 10.500q4.500 5 9 0" stroke="#4a3500" strokeWidth="1.300" />
            </svg>
            <svg width="5" height="3" viewBox="0 0 5 3"><path d="M0 0h5L2.500 3z" fill="#777" /></svg>
          </button>
          <button aria-label="Customize toolbar" className="pt-[7px]">
            <svg width="8" height="7" viewBox="0 0 8 7"><path d="M0 0h8v1H0zM0 3h8L4 7z" fill="#222" /></svg>
          </button>
        </div>
        <span className="ml-2 mt-[3px] h-3 w-px bg-[#aaa]" />
        <h1 className="ml-[7px] text-[11px] leading-[18px] text-black">day 2 (2) - Power BI Desktop</h1>
        <svg className="ml-auto mt-[2px]" width="12" height="8" viewBox="0 0 12 8">
          <path d="M0 4l4-3.500V3h4V.500L12 4 8 7.500V5H4v2.500z" fill="#222" />
        </svg>
        <button aria-label="Minimize" className="ml-[55px] mt-[7px] h-px w-[10px] bg-black" />
        <button aria-label="Restore" className="ml-[35px] mr-[30px] mt-[2px]">
          <svg width="11" height="11" viewBox="0 0 11 11" fill="none" stroke="#111">
            <path d="M.500 2.500h8v8h-8zM2.500 2.500v-2h8v8h-2" />
          </svg>
        </button>
      </header>

      <nav className="flex h-6 shrink-0 border-b border-[#d2d2d2]">
        <button className="w-[55px] bg-[#6f6f6f] text-white">File</button>
        <button className="mb-[-1px] w-[76px] border border-b-0 border-[#d2d2d2] bg-[#f3f3f3] pb-px">Home</button>
        <button className="w-14">View</button>
        <button className="w-[77px]">Modeling</button>
        <button className="ml-auto mr-[19px] text-[12px] text-black">Matt Allington</button>
        <svg className="mr-[-4px] mt-[9px]" width="8" height="6" viewBox="0 0 8 6" fill="none" stroke="#888"><path d="M1 5l3-3 3 3" /></svg>
      </nav>

      <div className="flex h-[92px] shrink-0 border-b border-[#d2d2d2] bg-[#f3f3f3]">
        <Group label="Clipboard" className="w-[155px]">
          <BigButton muted icon={<PasteIcon />} lines={["Paste"]} className="ml-[2px] w-12" />
          <div className="pt-[2px]">
            <SmallButton muted icon={<CutIcon />} label="Cut" />
            <SmallButton muted icon={<CopyIcon />} label="Copy" />
            <SmallButton muted icon={<PainterIcon />} label="Format Painter" />
          </div>
        </Group>
        <Group label="External Data" className="w-[260px]">
          <BigButton icon={<GetDataIcon />} lines={["Get", "Data"]} caret className="ml-[2px] w-11" />
          <BigButton icon={<RecentIcon />} lines={["Recent", "Sources"]} caret className="w-[52px]" />
          <BigButton icon={<EnterIcon />} lines={["Enter", "Data"]} className="w-[42px]" />
          <span className="ml-[5px] mt-1 h-14 w-px bg-[#dcdcdc]" />
          <BigButton icon={<EditIcon />} lines={["Edit", "Queries"]} caret className="w-14" />
          <span className="ml-[2px] mt-1 h-14 w-px bg-[#dcdcdc]" />
          <BigButton icon={<RefreshIcon />} lines={["Refresh"]} className="w-[50px]" />
        </Group>
        <Group label="Resources" className="w-[122px]">
          <BigButton icon={<PuzzleIcon />} lines={["Solution", "Templates"]} className="ml-[2px] w-[58px]" />
          <BigButton icon={<PartnerIcon />} lines={["Partner", "Showcase"]} className="w-[54px]" />
        </Group>
        <Group label="Insert" className="w-[167px]">
          <BigButton icon={<NewPageIcon />} lines={["New", "Page"]} caret className="ml-[2px] w-11" />
          <BigButton icon={<NewVisualIcon />} lines={["New", "Visual"]} className="w-[42px]" />
          <div className="ml-[3px] pt-[2px]">
            <SmallButton icon={<TextBoxIcon />} label="Text Box" />
            <SmallButton icon={<ImageIcon />} label="Image" />
            <SmallButton icon={<ShapesIcon />} label="Shapes" caret />
          </div>
        </Group>
        <Group label="View" className="w-[53px]">
          <BigButton icon={<PageViewIcon />} lines={["Page", "View"]} caret className="w-[50px]" />
        </Group>
        <Group label="Relationships" className="w-[86px]">
          <BigButton icon={<ManageIcon />} lines={["Manage", "Relationships"]} className="w-[84px]" />
        </Group>
        <Group label="Calculations" className="w-[74px]">
          <BigButton icon={<MeasureIcon />} lines={["New", "Measure"]} caret className="w-[70px]" />
        </Group>
        <Group label="Share" className="w-[54px]">
          <BigButton icon={<PublishIcon />} lines={["Publish"]} className="w-[50px]" />
        </Group>
      </div>

      <div className="flex min-h-0 flex-1">
        <aside className="flex w-[41px] shrink-0 flex-col bg-[#212121]">
          <button aria-label="Report view" className="flex h-[42px] items-center border-l-2 border-[#f2c811] pl-[9px] pt-[2px]">
            <svg width="19" height="19" viewBox="0 0 19 19" fill="none">
              <path d="M.500.500h18v17H.500z" stroke="#fff" />
              <path d="M3 7h3v11H3zM8 11h3v7H8zM13 5h3v13h-3z" fill="#fff" />
            </svg>
          </button>
          <button aria-label="Data view" className="flex h-[42px] items-center pl-[11px] pt-[2px]">
            <svg width="19" height="20" viewBox="0 0 19 20" fill="none">
              <path d="M.500.500h18v19H.500zM0 9.500h19M0 14.500h19M6.500 4v16M12.500 4v16" stroke="#858585" />
              <path d="M0 0h19v5H0z" fill="#858585" />
            </svg>
          </button>
          <button aria-label="Relationships view" className="flex h-[42px] items-center pl-[11px] pt-[2px]">
            <svg width="19" height="18" viewBox="0 0 19 18" fill="none" stroke="#858585">
              <path d="M.500 5.500h7v7h-7zM11.500.500h7v7h-7zM11.500 10.500h7v7h-7zM8 9l3-4M8 9l3 4" />
              <path d="M0 6.500h8M11 1.500h8M11 11.500h8" strokeWidth="2" />
            </svg>
          </button>
        </aside>

        <main className="flex min-w-0 flex-1 flex-col bg-[#e8e8e8]">
          <div className="flex-1 px-2 pr-[7px] pt-11">
            <div className="flex h-[443px] gap-4 bg-white pr-[3px] shadow-[0_0_8px_rgba(0,0,0,0.22)]">
              <div className="w-[308px] shrink-0 pl-2 pt-9 text-[7px] text-[#999]">
                <div className="ml-1 mr-[69px] flex h-[10px] items-center justify-between border-b border-[#bbb]">
                  <h2>Year</h2>
                  <svg width="8" height="8" viewBox="0 0 8 8" fill="none" stroke="#bbb"><path d="M1 5l3-4 3 2-3 4H2z" /></svg>
                </div>
                <div className="ml-px mr-[71px] mt-[2px] grid grid-cols-2 gap-x-[3px] gap-y-[3px] text-[23px] text-[#666]">
                  <button className="h-10 rounded border border-[#777] pt-px">2001</button>
                  <button className="h-10 rounded border border-[#777] pt-px">2003</button>
                  <button aria-pressed="true" className="h-10 rounded border border-[#777] bg-[#bdd7ee] pt-px">2002</button>
                  <button className="h-10 rounded border border-[#777] pt-px">2004</button>
                </div>
                <h2 className="mt-[41px] leading-[12px]">Name</h2>
                <WordCloud />
              </div>
              <div className="flex min-w-0 flex-1 flex-col pb-1 pt-5">
                <h2 className="h-3 text-[7px] leading-[12px] text-[#999]">Total Sales by Occupation</h2>
                <div className="grid flex-1 grid-cols-[230fr_195fr] gap-px border border-[#ddd] bg-[#ddd]">
                  <div className="grid grid-rows-[230fr_174fr] gap-px">
                    <Tile name="Professional" className="bg-[#01b8aa]" />
                    <Tile name="Skilled Manual" className="bg-[#374649]" />
                  </div>
                  <div className="grid grid-rows-[164fr_240fr] gap-px">
                    <Tile name="Management" className="bg-[#fd625e]" />
                    <div className="grid grid-cols-[118fr_77fr] gap-px">
                      <Tile name="Clerical" className="bg-[#f2c80f]" />
                      <Tile name="Manual" className="bg-[#5f6b6d]" />
                    </div>
                  </div>
                </div>
              </div>
            </div>
          </div>
          <footer className="flex h-1 shrink-0 border-t border-white">
            <button aria-label="Scroll pages" className="w-[35px] border-r border-[#aaa]" />
            <button aria-label="Page 1" className="w-[102px] border-r border-[#c4c4c4]" />
            <button aria-label="Page 2" className="w-[232px] border-r border-[#c4c4c4]" />
            <button aria-label="Page 3" className="w-[77px] border-r border-[#c4c4c4]" />
            <button aria-label="Page 4" className="w-[78px] border-r border-[#c4c4c4]" />
            <button aria-label="Page 5" className="w-[109px] border-r border-[#c4c4c4]" />
            <button aria-label="Page 6" className="flex-1 bg-white" />
            <button aria-label="New page" className="mr-[2px] w-[39px] bg-[#f2c811]" />
          </footer>
        </main>

        <aside className="w-[179px] shrink-0 border-l border-black bg-[#434343]">
          <div className="flex h-12 items-center justify-between bg-[#212121] pl-3 pr-[10px]">
            <h2 className="font-['Roboto'] text-[14px] font-medium text-white">Visualizations</h2>
            <button aria-label="Collapse pane">
              <svg width="8" height="13" viewBox="0 0 8 13" fill="none" stroke="#ddd" strokeWidth="1.300"><path d="M1 1l6 5.500L1 12" /></svg>
            </button>
          </div>
          <div className="grid grid-cols-[repeat(6,18px)] gap-x-[10px] gap-y-[6px] px-[9px] py-[5px]">
            {visuals.map(([name, art]) => (
              <button key={name} aria-label={name} className="h-[18px] w-[18px]">
                <svg className="overflow-visible" width="18" height="18" viewBox="0 0 18 18" fill="none">{art}</svg>
              </button>
            ))}
          </div>
          <div className="flex h-9 bg-[#212121] pl-3">
            <button aria-label="Fields" className="flex w-9 justify-center border-b-2 border-[#f2c811] pt-2">
              <svg width="20" height="20" viewBox="0 0 20 20" fill="none" stroke="#fff">
                <path d="M0 .500h16" /><path d="M.500 3.500h19v6H.500zM.500 12.500h19v6H.500z" strokeDasharray="2 1" />
              </svg>
            </button>
            <button aria-label="Format" className="ml-3 flex items-start pt-2">
              <svg width="20" height="20" viewBox="0 0 20 20" fill="none" stroke="#fff" strokeWidth="1.200">
                <path d="M1.500 1h14v4h-14zM15.500 2.500h3v4H9.500V11M7.500 11h4v8.500h-4z" />
              </svg>
            </button>
          </div>
          <h3 className="h-7 pl-3 leading-[30px] text-[#a3a3a3]">Values</h3>
          <Drop className="h-7 pl-[10px] pt-px" />
          <h2 className="mt-1 flex h-9 items-center bg-[#212121] pl-[14px] pt-[6px] font-['Roboto'] text-[14px] font-medium text-white">Filters</h2>
          <h3 className="h-9 pl-3 leading-[38px] text-[#a3a3a3]">Page level filters</h3>
          <Drop className="h-6 pl-2 pt-px" />
          <h3 className="h-9 pl-3 leading-[38px] text-[#a3a3a3]">Report level filters</h3>
          <Drop className="h-6 pl-2 pt-px" />
        </aside>
      </div>
    </div>
  );
}
